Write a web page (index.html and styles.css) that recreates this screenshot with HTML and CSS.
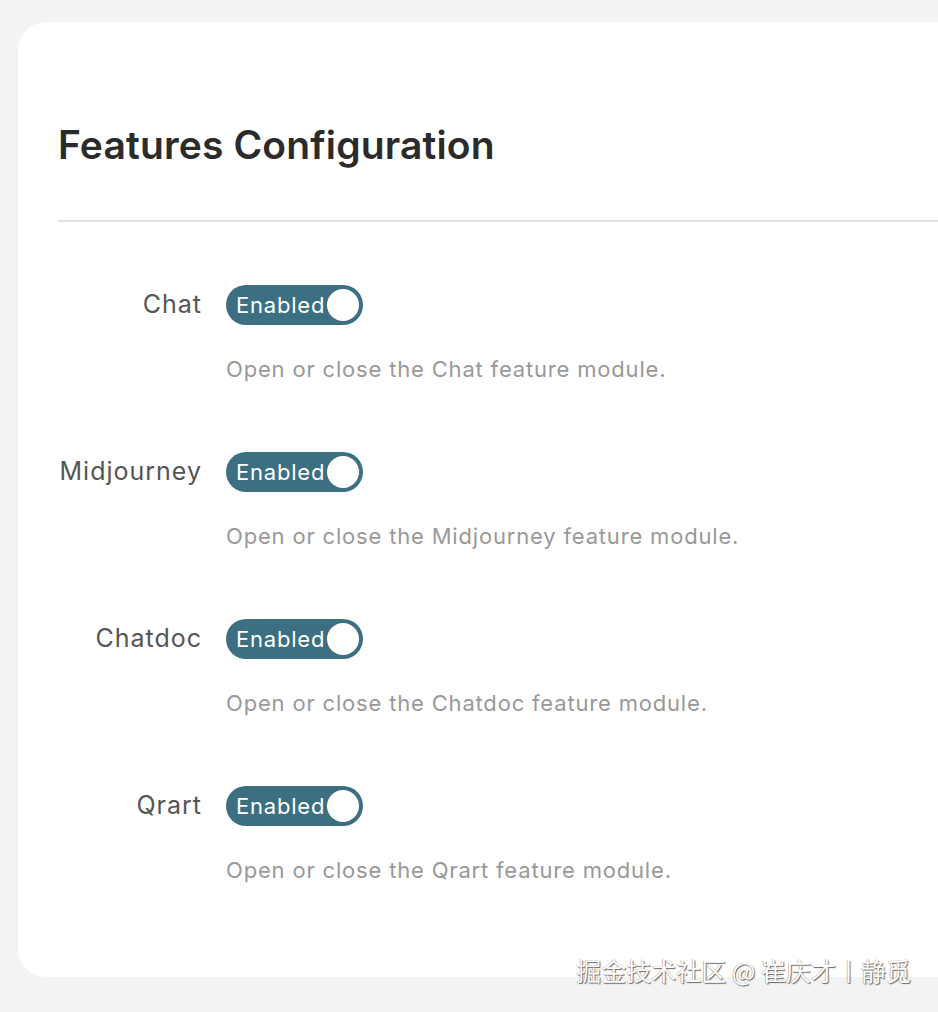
FILE: index.html
```html
<!DOCTYPE html>
<html>
<head>
<meta charset="utf-8">
<link rel="stylesheet" href="styles.css">
</head>
<body>
<div class="page">
  <div class="card">
    <h1 class="title">Features Configuration</h1>
    <div class="divider"></div>
    <div class="form">
      <div class="row">
        <div class="label">Chat</div>
        <div class="control">
          <div class="switch"><span class="switch-text">Enabled</span><span class="knob"></span></div>
          <div class="desc">Open or close the Chat feature module.</div>
        </div>
      </div>
      <div class="row">
        <div class="label">Midjourney</div>
        <div class="control">
          <div class="switch"><span class="switch-text">Enabled</span><span class="knob"></span></div>
          <div class="desc">Open or close the Midjourney feature module.</div>
        </div>
      </div>
      <div class="row">
        <div class="label">Chatdoc</div>
        <div class="control">
          <div class="switch"><span class="switch-text">Enabled</span><span class="knob"></span></div>
          <div class="desc">Open or close the Chatdoc feature module.</div>
        </div>
      </div>
      <div class="row">
        <div class="label">Qrart</div>
        <div class="control">
          <div class="switch"><span class="switch-text">Enabled</span><span class="knob"></span></div>
          <div class="desc">Open or close the Qrart feature module.</div>
        </div>
      </div>
    </div>
  </div>
  <div class="watermark">掘金技术社区 @ 崔庆才丨静觅</div>
</div>
</body>
</html>
```
FILE: styles.css
```css
html, body {
  margin: 0;
  padding: 0;
  background: #f2f3f5;
  font-family: Inter, "Liberation Sans", "Noto Sans CJK SC", sans-serif;
  overflow: hidden;
}
.page {
  position: relative;
  width: 938px;
  height: 1012px;
  padding: 22px 0 0 18px;
  box-sizing: border-box;
}
.card {
  background: #ffffff;
  width: 960px;
  height: 955px;
  border-radius: 28px;
  padding: 0 0 0 40px;
  box-sizing: border-box;
}
.title {
  margin: 0;
  padding-top: 100px;
  font-size: 39px;
  font-weight: 600;
  color: #2b2b2b;
  line-height: 46px;
  height: 98px;
  box-sizing: content-box;
  letter-spacing: 0.15px;
}
.divider {
  height: 2px;
  background: #e2e2e2;
}
.form {
  padding-top: 63px;
  display: flex;
  flex-direction: column;
}
.row {
  display: flex;
  align-items: flex-start;
  height: 167px;
}
.label {
  width: 144px;
  text-align: right;
  font-size: 25px;
  color: #555555;
  line-height: 38px;
  margin-right: 24px;
  white-space: nowrap;
  letter-spacing: 1px;
}
.control {
  display: flex;
  flex-direction: column;
}
.switch {
  width: 137px;
  height: 40px;
  border-radius: 20px;
  background: #3c6f81;
  display: flex;
  align-items: center;
  justify-content: space-between;
  padding: 0 4px 0 10px;
  box-sizing: border-box;
}
.switch-text {
  color: #ffffff;
  font-size: 22px;
  letter-spacing: 0.8px;
}
.knob {
  width: 32px;
  height: 32px;
  border-radius: 50%;
  background: #ffffff;
}
.desc {
  margin-top: 29px;
  font-size: 22px;
  color: #999999;
  line-height: 30px;
  white-space: nowrap;
  letter-spacing: 0.82px;
}
.watermark {
  position: absolute;
  right: 27px;
  top: 955px;
  font-size: 25px;
  color: #ffffff;
  font-family: "Noto Sans CJK SC", sans-serif;
  text-shadow: 1px 1px 1px #666, -0.5px -0.5px 0 #999;
  line-height: 30px;
}
```
